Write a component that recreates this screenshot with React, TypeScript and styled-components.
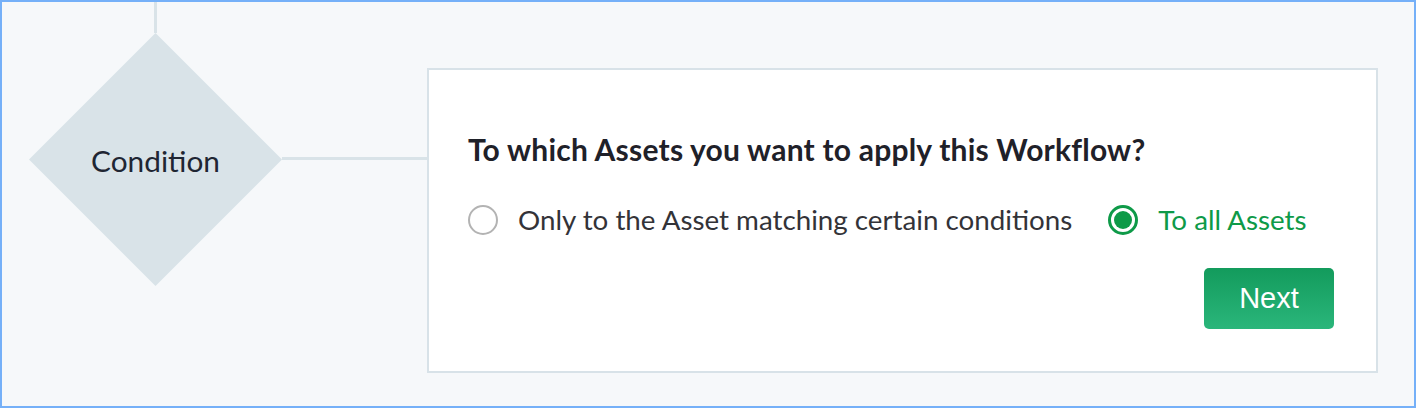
import React, { useState } from "react";
import styled, { createGlobalStyle } from "styled-components";

const GlobalStyle = createGlobalStyle`
  html, body { margin: 0; padding: 0; }
  body { font-family: Lato, "Noto Sans", sans-serif; }
  * { box-sizing: border-box; }
`;

const Frame = styled.div`
  width: 1416px;
  height: 408px;
  border: 2px solid #75b0f8;
  background: #f6f8fa;
  display: flex;
  align-items: flex-start;
  overflow: hidden;
`;

const Diagram = styled.div`
  display: flex;
  flex-direction: column;
  align-items: center;
  margin-left: 27px;
  width: 253px;
`;

const VerticalLine = styled.div`
  width: 3px;
  height: 31px;
  background: #d9e3e8;
`;

const Diamond = styled.div`
  width: 253px;
  height: 253px;
  background: #d9e3e8;
  clip-path: polygon(50% 0, 100% 50%, 50% 100%, 0 50%);
  display: flex;
  align-items: center;
  justify-content: center;
  font-size: 29.8px;
  color: #1f2633;
  padding-top: 2px;
`;

const Connector = styled.div`
  width: 145px;
  height: 3px;
  background: #d9e3e8;
  margin-top: 155px;
`;

const Card = styled.div`
  margin-top: 66px;
  width: 951px;
  height: 305px;
  background: #ffffff;
  border: 2px solid #d8e2e8;
  padding: 61px 42px 0 39px;
  display: flex;
  flex-direction: column;
`;

const Title = styled.h2`
  margin: 0;
  font-size: 30px;
  font-weight: 700;
  color: #1f2129;
  line-height: 36px;
  letter-spacing: 0.22px;
`;

const Options = styled.div`
  display: flex;
  align-items: center;
  gap: 36px;
  margin-top: 36px;
`;

const Option = styled.label<{ $checked: boolean }>`
  display: flex;
  align-items: center;
  gap: 20px;
  cursor: pointer;
  font-size: 27.75px;
  line-height: 34px;
  color: ${(p) => (p.$checked ? "#0e9a48" : "#333338")};
`;

const Radio = styled.span<{ $checked: boolean }>`
  width: 30px;
  height: 30px;
  border-radius: 50%;
  border: ${(p) => (p.$checked ? "3px solid #0e9a48" : "2px solid #b3b3b3")};
  display: flex;
  align-items: center;
  justify-content: center;
  flex-shrink: 0;
  &::after {
    content: "";
    display: ${(p) => (p.$checked ? "block" : "none")};
    width: 18px;
    height: 18px;
    border-radius: 50%;
    background: #0e9a48;
  }
`;

const Footer = styled.div`
  display: flex;
  justify-content: flex-end;
  margin-top: 31px;
`;

const NextButton = styled.button`
  width: 130px;
  height: 61px;
  border: none;
  border-radius: 5px;
  background: linear-gradient(180deg, #139b5c 0%, #2ab67b 100%);
  color: #ffffff;
  font-family: "Liberation Sans", Arial, sans-serif;
  font-size: 29px;
  cursor: pointer;
  padding: 0;
`;

export default function App() {
  const [choice, setChoice] = useState<"some" | "all">("all");
  return (
    <>
      <GlobalStyle />
      <Frame>
        <Diagram>
          <VerticalLine />
          <Diamond>Condition</Diamond>
        </Diagram>
        <Connector />
        <Card>
          <Title>To which Assets you want to apply this Workflow?</Title>
          <Options>
            <Option $checked={choice === "some"} onClick={() => setChoice("some")}>
              <Radio $checked={choice === "some"} />
              Only to the Asset matching certain conditions
            </Option>
            <Option $checked={choice === "all"} onClick={() => setChoice("all")}>
              <Radio $checked={choice === "all"} />
              To all Assets
            </Option>
          </Options>
          <Footer>
            <NextButton>Next</NextButton>
          </Footer>
        </Card>
      </Frame>
    </>
  );
}
